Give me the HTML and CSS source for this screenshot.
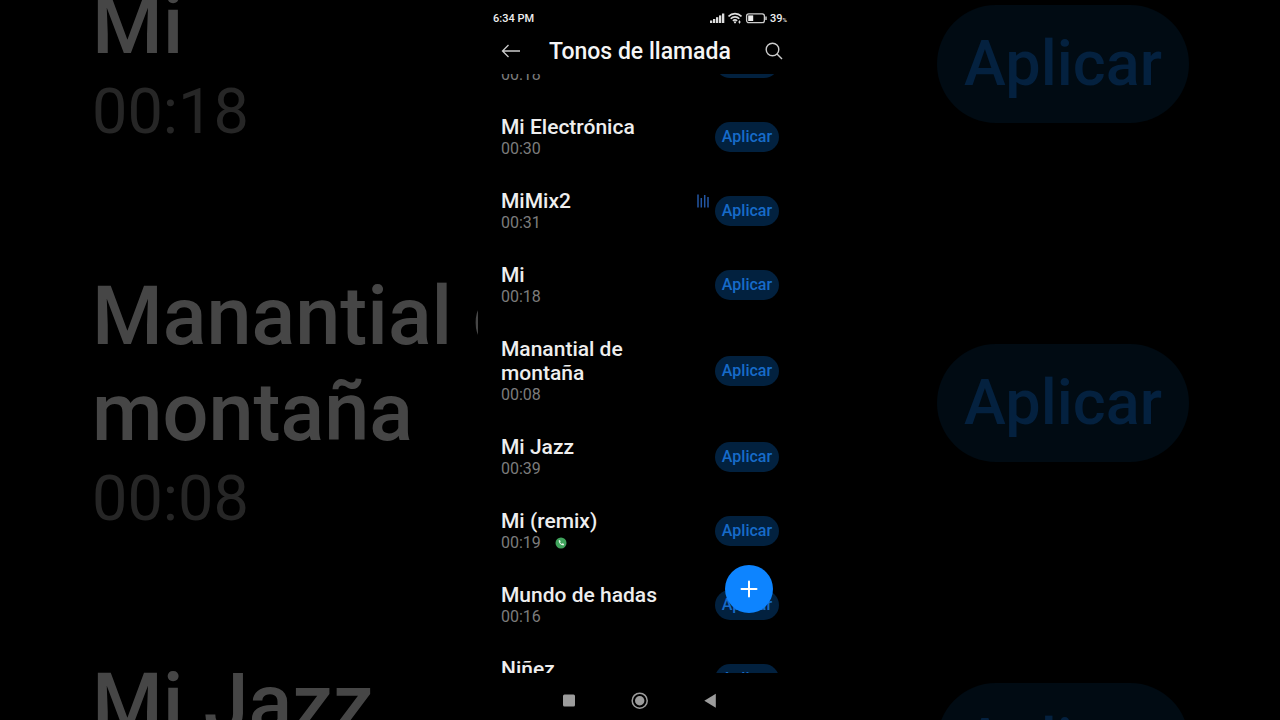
FILE: index.html
```html
<!DOCTYPE html>
<html lang="es">
<head>
  <meta charset="UTF-8">
  <title>Tonos de llamada</title>
  <meta name="viewport" content="width=device-width, initial-scale=1.0">
  <link rel="stylesheet" href="styles.css">
</head>
<body>

  <!-- Enlarged, dimmed list behind the phone -->
  <div class="backdrop" aria-hidden="true">
    <ul class="tones">
      <li class="tone">
        <div class="info">
          <div class="name">Mi</div>
          <div class="time">00:18</div>
        </div>
        <button class="apply" tabindex="-1">Aplicar</button>
      </li>
      <li class="tone">
        <div class="info">
          <div class="name">Manantial de<br>montaña</div>
          <div class="time">00:08</div>
        </div>
        <button class="apply" tabindex="-1">Aplicar</button>
      </li>
      <li class="tone">
        <div class="info">
          <div class="name">Mi Jazz</div>
          <div class="time">00:39</div>
        </div>
        <button class="apply" tabindex="-1">Aplicar</button>
      </li>
    </ul>
  </div>

  <main class="phone">
    <div class="status">
      <span class="clock">6:34 PM</span>
      <svg width="16" height="12" viewBox="0 0 16 12" fill="#ddd">
        <rect x="1" y="8.500" width="2.300" height="2.500"/>
        <rect x="4" y="7" width="2.300" height="4"/>
        <rect x="7" y="5.200" width="2.300" height="5.800"/>
        <rect x="10" y="3.400" width="2.300" height="7.600"/>
        <rect x="13" y="1.500" width="2.300" height="9.500"/>
      </svg>
      <svg width="14" height="12" viewBox="0 0 14 12" fill="none" stroke="#ddd" stroke-width="1.600">
        <path d="M.5 4.500C4 .7 10 .7 13.500 4.500M2.700 6.700c2.400-2.400 6.200-2.400 8.600 0M4.900 8.900c1.200-1.200 3-1.200 4.200 0"/>
        <circle cx="7" cy="10.300" r="1.100" fill="#ddd" stroke="none"/>
        <path d="M11.500 8.500v3M10.300 10h2.400" stroke-width="1"/>
      </svg>
      <svg width="22" height="12" viewBox="0 0 22 12">
        <rect x="1.600" y="1.800" width="17.800" height="8.800" rx="2.200" fill="none" stroke="#ccc" stroke-width="1.300"/>
        <rect x="3.200" y="3.400" width="5" height="5.600" fill="#eee"/>
        <path d="M21 4.500v3.400" stroke="#ccc" stroke-width="1.500"/>
      </svg>
      <span class="level">39<small>%</small></span>
    </div>

    <header class="appbar">
      <button class="icon-btn" aria-label="Atrás">
        <svg width="20" height="16" viewBox="0 0 20 16" fill="none" stroke="#ccc" stroke-width="1.300">
          <path d="M19 8H1.500M7.500 2l-6 6 6 6"/>
        </svg>
      </button>
      <h1>Tonos de llamada</h1>
      <button class="icon-btn" aria-label="Buscar">
        <svg width="20" height="20" viewBox="0 0 20 20" fill="none" stroke="#ccc" stroke-width="1.400">
          <circle cx="8.500" cy="8.500" r="6.300"/>
          <path d="M13 13l5 5"/>
        </svg>
      </button>
    </header>

    <div class="list">
      <ul class="tones">
        <li class="tone">
          <div class="info">
            <div class="name">Mi</div>
            <div class="time">00:18</div>
          </div>
          <button class="apply">Aplicar</button>
        </li>
        <li class="tone">
          <div class="info">
            <div class="name">Mi Electrónica</div>
            <div class="time">00:30</div>
          </div>
          <button class="apply">Aplicar</button>
        </li>
        <li class="tone">
          <div class="info">
            <div class="name">MiMix2
              <svg class="playing" width="12" height="14" viewBox="0 0 12 14" stroke="#2357a5" stroke-width="1.500">
                <path d="M1 .5v13M4.300 4v9.500M7.700 1v12.500M11 3v10.500"/>
              </svg>
            </div>
            <div class="time">00:31</div>
          </div>
          <button class="apply">Aplicar</button>
        </li>
        <li class="tone">
          <div class="info">
            <div class="name">Mi</div>
            <div class="time">00:18</div>
          </div>
          <button class="apply">Aplicar</button>
        </li>
        <li class="tone">
          <div class="info">
            <div class="name">Manantial de<br>montaña</div>
            <div class="time">00:08</div>
          </div>
          <button class="apply">Aplicar</button>
        </li>
        <li class="tone">
          <div class="info">
            <div class="name">Mi Jazz</div>
            <div class="time">00:39</div>
          </div>
          <button class="apply">Aplicar</button>
        </li>
        <li class="tone">
          <div class="info">
            <div class="name">Mi (remix)</div>
            <div class="time">00:19
              <svg width="12" height="12" viewBox="0 0 12 12">
                <circle cx="6" cy="6" r="5.500" fill="#3fa35c"/>
                <path d="M3.600 3.400c.2 2.800 2.200 4.800 5 5l.5-1.300-1.500-.8-.8.600c-.8-.4-1.300-.9-1.700-1.700l.6-.8-.8-1.500z" fill="#e4f5e8"/>
              </svg>
            </div>
          </div>
          <button class="apply">Aplicar</button>
        </li>
        <li class="tone">
          <div class="info">
            <div class="name">Mundo de hadas</div>
            <div class="time">00:16</div>
          </div>
          <button class="apply">Aplicar</button>
        </li>
        <li class="tone">
          <div class="info">
            <div class="name">Niñez</div>
            <div class="time">00:20</div>
          </div>
          <button class="apply">Aplicar</button>
        </li>
      </ul>
      <button class="fab" aria-label="Añadir">
        <svg width="18" height="18" viewBox="0 0 18 18" stroke="#fff" stroke-width="2" stroke-linecap="round">
          <path d="M9 1.500v15M1.500 9h15"/>
        </svg>
      </button>
    </div>

    <nav class="navbar">
      <button aria-label="Recientes">
        <svg width="18" height="18" viewBox="0 0 18 18"><rect x="2" y="2.500" width="12" height="12" rx="1.500" fill="#9c9c9c"/></svg>
      </button>
      <button aria-label="Inicio">
        <svg width="18" height="18" viewBox="0 0 18 18">
          <circle cx="8.700" cy="8.700" r="7.500" fill="none" stroke="#9c9c9c" stroke-width="1.500"/>
          <circle cx="8.700" cy="8.700" r="4.700" fill="#9c9c9c"/>
        </svg>
      </button>
      <button aria-label="Volver">
        <svg width="18" height="18" viewBox="0 0 18 18"><path d="M14.800 1.800v14L3.300 8.800z" fill="#9c9c9c"/></svg>
      </button>
    </nav>
  </main>

</body>
</html>
```
FILE: styles.css
```css
* {
  box-sizing: border-box;
}

body {
  display: grid;
  height: 100vh;
  margin: 0;
  background-color: #000;
  color: #eee;
  font-family: Roboto, sans-serif;
  overflow: hidden;
}

button {
  padding: 0;
  border: none;
  background: none;
  font-family: inherit;
  cursor: pointer;
}

svg {
  display: block;
  flex: none;
}

/* backdrop and phone share one grid cell */
.backdrop,
.phone {
  grid-area: 1 / 1;
  min-height: 0;
}

.phone {
  display: flex;
  flex-direction: column;
  justify-self: center;
  width: 324px;
  background-color: #000;
}

/* Status bar */
.status {
  display: flex;
  align-items: center;
  gap: 3px;
  height: 28px;
  padding: 8px 15px 0;
  font-size: 11px;
  font-weight: 500;
}

.clock {
  margin-right: auto;
}

.level small {
  font-size: 6px;
}

/* App bar */
.appbar {
  display: flex;
  align-items: center;
  height: 46px;
  padding: 0 18px 0 23px;
}

.appbar h1 {
  flex: 1;
  margin: 0 0 0 28px;
  font-size: 23px;
  font-weight: 500;
  color: #f5f5f5;
}

/* Tone list */
.list {
  position: relative;
  flex: 1;
  min-height: 0;
  overflow: hidden;
}

.tones {
  margin: 0;
  padding: 0;
  list-style: none;
}

/* scrolled part way down */
.list .tones {
  margin-top: -48px;
}

.tone {
  display: flex;
  align-items: center;
  gap: 6px;
  padding: 15px 23px 16px;
}

.info {
  flex: 1;
}

.name {
  display: flow-root;
  font-size: 21px;
  font-weight: 500;
  line-height: 24px;
}

.time {
  display: flex;
  align-items: center;
  gap: 14px;
  font-size: 16px;
  line-height: 19px;
  color: #7c7c7c;
}

.playing {
  float: right;
  margin-top: 5px;
}

.apply {
  width: 64px;
  height: 30px;
  border-radius: 15px;
  background-color: #02213f;
  color: #176bc9;
  font-size: 16px;
  font-weight: 500;
}

.fab {
  position: absolute;
  right: 29px;
  bottom: 60px;
  display: grid;
  place-items: center;
  width: 48px;
  height: 48px;
  border-radius: 50%;
  background-color: #0d84ff;
}

/* Navigation buttons */
.navbar {
  display: flex;
  justify-content: center;
  height: 47px;
}

.navbar button {
  display: grid;
  place-items: center;
  width: 70px;
  padding-top: 8px;
}

/* Backdrop sizes and colours */
.backdrop {
  overflow: hidden;
}

.backdrop .tones {
  margin-top: -82px;
}

.backdrop .tone {
  padding: 60px 91px 60px 92px;
}

.backdrop .name {
  font-size: 81px;
  line-height: 96px;
  color: #464646;
}

.backdrop .time {
  font-size: 63px;
  line-height: 75px;
  color: #262626;
}

.backdrop .apply {
  width: 252px;
  height: 118px;
  border-radius: 59px;
  background-color: #010b13;
  color: #04213f;
  font-size: 63px;
}
```
